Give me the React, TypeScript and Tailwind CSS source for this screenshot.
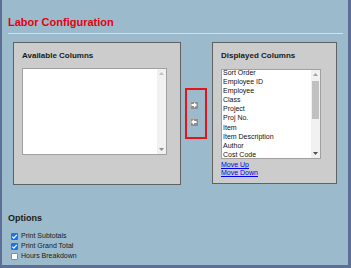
import React from "react";

const font = { fontFamily: '"Liberation Sans", Arial, sans-serif' };

function ArrowBtn({ dir }: { dir: "right" | "left" }) {
  return (
    <svg width="8" height="8" viewBox="0 0 8 8" className="block">
      <rect x="0" y="0" width="8" height="8" fill="#8e8e8e" />
      <rect x="0" y="0" width="8" height="1" fill="#b4b4b4" />
      <rect x="0" y="0" width="1" height="8" fill="#b4b4b4" />
      {dir === "right" ? (
        <polygon points="1.5,3 4,3 4,1.2 7,4 4,6.8 4,5 1.5,5" fill="#ffffff" />
      ) : (
        <polygon points="6.5,3 4,3 4,1.2 1,4 4,6.8 4,5 6.5,5" fill="#ffffff" />
      )}
    </svg>
  );
}

function Check({ checked }: { checked: boolean }) {
  return checked ? (
    <span className="w-[7px] h-[7px] rounded-[1px] bg-[#1a73e8] flex items-center justify-center">
      <svg width="7" height="7" viewBox="0 0 7 7">
        <polyline points="1.3,3.6 2.8,5.1 5.8,1.8" fill="none" stroke="#fff" strokeWidth="1.2" />
      </svg>
    </span>
  ) : (
    <span className="w-[7px] h-[7px] rounded-[1px] bg-white border border-[#8a8a8a]" />
  );
}

function UpTri({ color }: { color: string }) {
  return (
    <svg width="5" height="3" viewBox="0 0 5 3" className="block">
      <polygon points="0,3 2.5,0 5,3" fill={color} />
    </svg>
  );
}
function DownTri({ color }: { color: string }) {
  return (
    <svg width="5" height="3" viewBox="0 0 5 3" className="block">
      <polygon points="0,0 5,0 2.5,3" fill={color} />
    </svg>
  );
}

const items = [
  "Sort Order",
  "Employee ID",
  "Employee",
  "Class",
  "Project",
  "Proj No.",
  "Item",
  "Item Description",
  "Author",
  "Cost Code",
];

export default function App() {
  return (
    <div
      style={font}
      className="w-[351px] h-[268px] bg-[#9bbacb] border-l-2 border-r-[3px] border-b-[3px] border-[#5d6f96] flex flex-col text-[#1a1a1a] overflow-hidden"
    >
      <div className="mt-[16px] ml-[6px] text-[11px] leading-[13px] font-bold text-[#e4000f]">
        Labor Configuration
      </div>
      <div className="mt-[4px] ml-[6px] mr-[5px] h-px bg-[#d6dfe4]" />

      <div className="mt-[8px] ml-[11px] flex items-start">
        {/* Available */}
        <div className="w-[168px] h-[143px] bg-[#cccccc] border border-[#616161] pt-[8px] pl-[8px] flex flex-col">
          <div className="text-[8px] leading-[10px] font-bold">Available Columns</div>
          <div className="mt-[7px] w-[145px] h-[87px] bg-white border border-[#a0a0a0] flex">
            <div className="flex-1" />
            <div className="w-[9px] bg-[#f1f1f1] flex flex-col items-center justify-between pt-[3px] pb-[3px]">
              <UpTri color="#c3c3c3" />
              <DownTri color="#8f8f8f" />
            </div>
          </div>
        </div>

        {/* buttons */}
        <div className="ml-[4px] mt-[46px] w-[22px] h-[51px] border-2 border-[#e4141c] flex flex-col items-start pl-[3px] pt-[11px] gap-[9px]">
          <ArrowBtn dir="right" />
          <ArrowBtn dir="left" />
        </div>

        {/* Displayed */}
        <div className="ml-[5px] w-[125px] h-[142px] bg-[#cccccc] border border-[#616161] pt-[8px] pl-[8px] flex flex-col">
          <div className="text-[8px] leading-[10px] font-bold">Displayed Columns</div>
          <div className="mt-[8px] w-[100px] h-[90px] bg-white border border-[#a0a0a0] flex overflow-hidden">
            <div className="flex-1 overflow-hidden pl-px">
              <div className="mt-[-2px]">
                {items.map((t) => (
                  <div key={t} className="text-[7px] leading-[9.1px] whitespace-nowrap text-[#111]">
                    {t}
                  </div>
                ))}
              </div>
            </div>
            <div className="w-[9px] bg-[#f1f1f1] flex flex-col items-center pt-[3px] pb-[3px]">
              <UpTri color="#a3a3a3" />
              <div className="mt-[5px] w-[7px] h-[38px] bg-[#c1c1c1]" />
              <div className="flex-1" />
              <DownTri color="#505050" />
            </div>
          </div>
          <div className="mt-[2px] text-[7px] leading-[8px] text-[#0000ee] underline">Move Up</div>
          <div className="text-[7px] leading-[8px] text-[#0000ee] underline">Move Down</div>
        </div>
      </div>

      <div className="mt-[28px] ml-[6px] text-[9px] leading-[11px] font-bold">Options</div>
      <div className="mt-[7px] ml-[9px] flex flex-col">
        {[
          ["Print Subtotals", true],
          ["Print Grand Total", true],
          ["Hours Breakdown", false],
        ].map(([label, c]) => (
          <div key={label as string} className="h-[10px] flex items-center gap-[3px]">
            <Check checked={c as boolean} />
            <span className="text-[7px] leading-[10px]">{label as string}</span>
          </div>
        ))}
      </div>
    </div>
  );
}
